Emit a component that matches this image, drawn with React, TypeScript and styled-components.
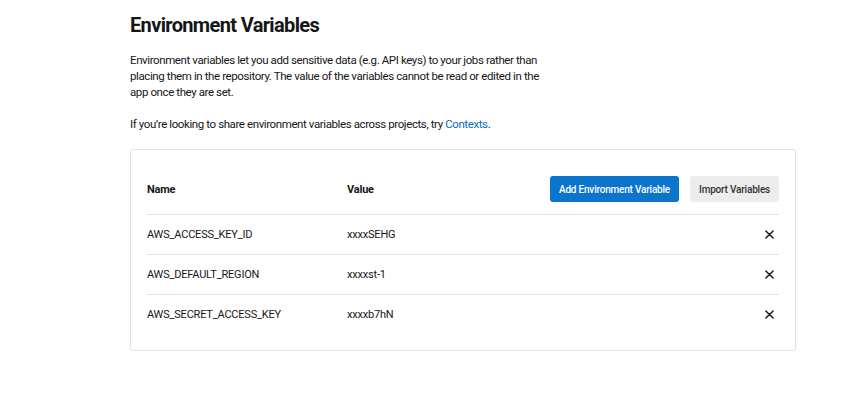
import React from "react";
import styled, { createGlobalStyle } from "styled-components";

const GlobalStyle = createGlobalStyle`
    body {
        margin: 0;
        background: #ffffff;
        font-family: Roboto, "Liberation Sans", sans-serif;
        color: #161616;
    }
`;

const variables = [
    { name: "AWS_ACCESS_KEY_ID", value: "xxxxSEHG" },
    { name: "AWS_DEFAULT_REGION", value: "xxxxst-1" },
    { name: "AWS_SECRET_ACCESS_KEY", value: "xxxxb7hN" },
];

const CloseIcon = () => (
    <svg width="9" height="9" viewBox="0 0 10 10">
        <path d="M1 1 L9 9 M9 1 L1 9" stroke="#161616" strokeWidth="1.6" strokeLinecap="round" />
    </svg>
);

const App = () => {
    return (
        <>
            <GlobalStyle />
            <Page>
                <Title>Environment Variables</Title>
                <Text>
                    Environment variables let you add sensitive data (e.g. API keys) to your jobs rather than
                    placing them in the repository. The value of the variables cannot be read or edited in the
                    app once they are set.
                </Text>
                <Text>
                    If you’re looking to share environment variables across projects, try <Link>Contexts</Link>.
                </Text>
                <Card>
                    <HeaderRow>
                        <NameCell $bold>Name</NameCell>
                        <ValueCell $bold>Value</ValueCell>
                        <Actions>
                            <Button $primary>Add Environment Variable</Button>
                            <Button>Import Variables</Button>
                        </Actions>
                    </HeaderRow>
                    {variables.map((v) => (
                        <Row key={v.name}>
                            <NameCell>{v.name}</NameCell>
                            <ValueCell>{v.value}</ValueCell>
                            <RemoveButton aria-label="Remove">
                                <CloseIcon />
                            </RemoveButton>
                        </Row>
                    ))}
                </Card>
            </Page>
        </>
    );
};

export default App;

const Page = styled.main`
    width: 666px;
    padding: 12px 0 0 130px;
`;

const Title = styled.h1`
    font-size: 20px;
    font-weight: 700;
    line-height: 26px;
    margin: 0 0 14px 0;
    letter-spacing: -0.65px;
`;

const Text = styled.p`
    width: 418px;
    font-size: 11.5px;
    line-height: 16px;
    margin: 0 0 16px 0;
    letter-spacing: -0.4px;
    color: #161616;
`;

const Link = styled.a`
    color: #0969c3;
    cursor: pointer;
`;

const Card = styled.section`
    margin-top: 17px;
    border: 1px solid #e3e3e3;
    border-radius: 3px;
    box-shadow: 0 1px 2px rgba(0, 0, 0, 0.05);
    padding: 26px 16px 16px 16px;
`;

const HeaderRow = styled.div`
    display: flex;
    align-items: center;
    padding-bottom: 12px;
    border-bottom: 1px solid #e3e3e3;
`;

const Row = styled.div`
    display: flex;
    align-items: center;
    height: 39px;
    border-bottom: 1px solid #e3e3e3;

    &:last-child {
        border-bottom: none;
    }
`;

const NameCell = styled.div<{ $bold?: boolean }>`
    width: 200px;
    font-size: 11px;
    letter-spacing: -0.2px;
    font-weight: ${(p) => (p.$bold ? 700 : 400)};
`;

const ValueCell = styled.div<{ $bold?: boolean }>`
    flex: 1;
    font-size: 11px;
    letter-spacing: -0.2px;
    font-weight: ${(p) => (p.$bold ? 700 : 400)};
`;

const Actions = styled.div`
    display: flex;
    gap: 11px;
`;

const Button = styled.button<{ $primary?: boolean }>`
    height: 26px;
    padding: 0 9px;
    border: none;
    border-radius: 3px;
    font-family: Roboto, "Liberation Sans", sans-serif;
    font-size: 10px;
    font-weight: 500;
    letter-spacing: -0.2px;
    background: ${(p) => (p.$primary ? "#0b74cc" : "#ececec")};
    color: ${(p) => (p.$primary ? "#ffffff" : "#333333")};
    cursor: pointer;
`;

const RemoveButton = styled.button`
    display: flex;
    align-items: center;
    justify-content: center;
    width: 20px;
    height: 20px;
    padding: 0;
    border: none;
    background: none;
    cursor: pointer;
`;
